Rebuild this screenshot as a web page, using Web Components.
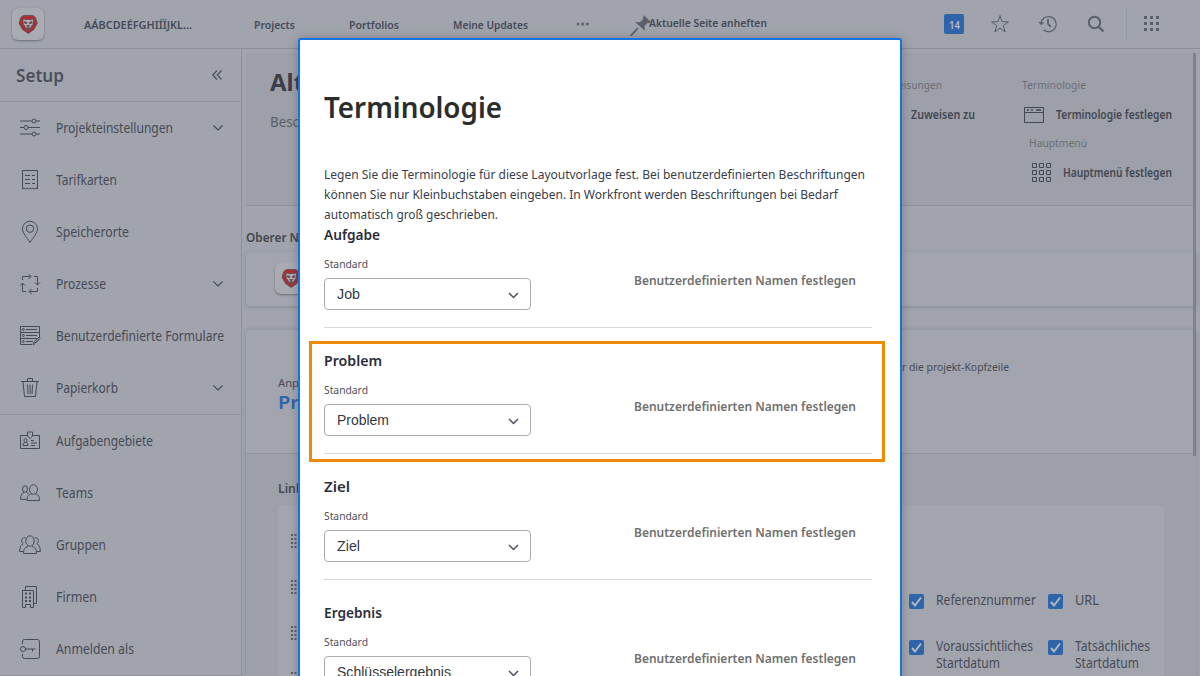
<!DOCTYPE html>
<html lang="de">
<head>
<meta charset="utf-8">
<title>Terminologie</title>
<style>
html,body{margin:0;height:676px;overflow:hidden}
body{font-family:"Noto Sans","Open Sans",sans-serif;font-size:13px;color:#464a57;background:#a1a4ac}
</style>
</head>
<body>
<setup-app></setup-app>
<script>
function define(name, html, extend) {
  customElements.define(name, class extends HTMLElement {
    connectedCallback() {
      if (this.shadowRoot) return;
      this.attachShadow({mode: 'open'}).innerHTML = typeof html === 'function' ? html(this) : html;
      if (extend) extend(this);
    }
  });
}

const lion = `<path fill="#a92f31" d="M6 1h14l4 3 2.500 8.500-5 9.500-8.500 6-8.500-6L-.5 12.500 2 4z"/><path fill="#b4b2b8" d="M6 6l3.500 1.500 3.500-.5 3.500.5L20 6l1 4-1 1.500.5 3-2.500 2-1.500 4-3.500 2-3.500-2L8 16.500l-2.500-2 .5-3L5 10z"/><path fill="#a92f31" d="M7.500 10l4 1.700-.7 1.700-3-.8zM18.500 10l-4 1.700.7 1.700 3-.8zM10.700 16h4.600L13 18.500zM10 20l3-1 3 1-3 .7z"/>`;
const icons = {
  lion: [27, 29, lion],
  sliders: [20, 20, '<path d="M0 3h12M16 3h4M0 9.500h4M8 9.500h12M0 16h12M16 16h4"/><circle cx="14" cy="3" r="2"/><circle cx="6" cy="9.500" r="2"/><circle cx="14" cy="16" r="2"/>'],
  card: [20, 20, '<path d="M2.500 19V.5h15V19l-1.500-1-1.500 1-1.500-1-1.500 1-1.500-1-1.500 1-1.500-1-1.500 1-1.500-1zM5 5.500h5M12 5.500h3M5 9.500h5M12 9.500h3M5 13.500h5M12 13.500h3"/>'],
  pin: [20, 22, '<path d="M10 21.500C7 16.500 2.500 12.500 2.500 7.700a7.500 7.500 0 0 1 15 0C17.500 12.500 13 16.500 10 21.500z"/><circle cx="10" cy="7.700" r="3.700"/>'],
  cycle: [20, 20, '<path d="M2.500 6V2.500h8M8.500 0 11 2.500 8.500 5M14 2.500h3.500V11M15 8.500l2.500 2.500L20 8.500M17.500 14v3.500H9.500M11.500 15 9 17.500l2.500 2.500M6 17.500H2.500V9M0 11.500 2.500 9 5 11.500"/>'],
  form: [20, 20, '<path d="M12 18.500H.5V.5h19V12M.5 6.500h19M.5 12.500h17M6 3.500h11M6 9.500h11M6 15.500h7M13 19l1-3 5-5 1 1.500-5 5zM15 17l4-4"/><circle cx="3.300" cy="3.500" r="1"/><circle cx="3.300" cy="9.500" r="1"/><circle cx="3.300" cy="15.500" r="1"/>'],
  trash: [20, 20, '<path d="M1 3.500h18M7.500 3.500v-3h5v3M3 4l1.500 14.500h11L17 4M7.500 6.500l.5 9.500M10 6.500V16M12.500 6.500L12 16"/>'],
  badge: [20, 20, '<path d="M7.500 4.500H.5v13h19v-13h-7M7.500 1h5v4L10 7.500 7.500 5zM3 14.500c0-2.500 1-3 2.500-3s2.500.5 2.500 3zM11 9.500h3M11 12h6M11 14.500h4"/><ellipse cx="5.500" cy="9.500" rx="1.500" ry="2"/>'],
  team: [20, 18, '<ellipse cx="13.500" cy="5.500" rx="4" ry="4.800"/><ellipse cx="5" cy="5" rx="2.500" ry="3.200"/><path d="M11.500 10c-3 .7-4.500 2-4.500 6.500h12.500c0-4.500-1-5.800-4-6.500M4 8.300c-2.500.7-3 3-3.500 7h6M6.500 8.300l2 1.500"/>'],
  groups: [22, 20, '<ellipse cx="11" cy="6" rx="4.200" ry="5.200"/><path d="M9 11.500c-3 .7-4.500 2.500-4.500 7h13c0-4.500-1.500-6.300-4.500-7M6.500 3c-2-1-4 .5-3.800 3 .1 1.500.8 2 1.500 2.700C1.500 10 1 12 .6 16.500h3.500M15.500 3c2-1 4 .5 3.800 3-.1 1.500-.8 2-1.500 2.700 2.700 1.300 3.200 3.300 3.600 7.800h-3.500"/>'],
  firm: [20, 22, '<path d="M2.500 4.500h11v17h-3v-3h-5v3h-3zM5.500 4V.5h11v17H14"/><path d="M5 7.500h2M9 7.500h2M5 11.500h2M9 11.500h2M5 15h2M9 15h2" stroke-width="2"/>'],
  key: [20, 20, '<circle cx="3" cy="10" r="2.500"/><path d="M5.500 10h10M12.500 10v2.500M2.500 5V2.500q0-2 2-2h13q2 0 2 2v15q0 2-2 2h-13q-2 0-2-2V15"/>'],
  collapse: [10, 10, '<path d="M5 .5.8 5 5 9.500M9.500.5 5.300 5l4.200 4.500" stroke-width="1.200"/>'],
  down: [10, 6, '<path d="M.5.500 5 5 9.500.5" stroke-width="1.100"/>'],
  downbold: [11, 7, '<path d="M1 1l4.500 4.500L10 1" stroke-width="1.500"/>'],
  pushpin: [24, 24, '<path fill="currentColor" stroke="none" d="M14.500 1 22.500 8.500 18.500 9l-3 3 .5 5L6 8l5 .3 3.200-3.300z"/><path d="M9 14 1.500 22" stroke-width="1.800"/>'],
  star: [18, 18, '<path d="M9 .500l2 6.200 6.500.1-5.200 3.900 1.900 6.300L9 13.200 3.800 17l1.900-6.300L.5 6.800 7 6.700z"/>'],
  history: [18, 18, '<path d="M2 9A7.600 7.600 0 1 1 4.500 14.800M.2 7 2.200 9.300 4.700 7.300" stroke-width="1.200"/><path d="M9 4v5l2.800 2.800" stroke-width="1.800"/>'],
  search: [18, 18, '<circle cx="7.500" cy="7.500" r="5.700" stroke-width="2"/><path d="M12 12l4.500 4.500" stroke-width="2.400"/>'],
  apps: [16, 16, '<path fill="currentColor" stroke="none" d="M0 0h3v3H0zM6 0h3v3H6zM12 0h3v3h-3zM0 6h3v3H0zM6 6h3v3H6zM12 6h3v3h-3zM0 12h3v3H0zM6 12h3v3H6zM12 12h3v3h-3z"/>'],
  more: [14, 4, '<g fill="currentColor" stroke="none"><circle cx="2" cy="2" r="1.500"/><circle cx="6.700" cy="2" r="1.500"/><circle cx="11.300" cy="2" r="1.500"/></g>'],
  window: [20, 16, '<path d="M.5.500h19v15H.5zM.5 5.500h19"/><path d="M3 3h2M7 3h2M12 3h5" stroke-width="1.700"/>'],
  menu: [20, 20, '<path d="M1.500.500h4v4h-4zM8.500.500h4v4h-4zM15.500.500h4v4h-4zM1.500 7.500h4v4h-4zM8.500 7.500h4v4h-4zM15.500 7.500h4v4h-4zM1.500 14.500h4v4h-4zM8.500 14.500h4v4h-4zM15.500 14.500h4v4h-4z"/>'],
  grip: [6, 14, '<path d="M0 1h2M3.500 1h2M0 5h2M3.500 5h2M0 9h2M3.500 9h2M0 13h2M3.500 13h2" stroke-width="2"/>']
};
define('ui-icon', el => {
  const [w, h, body] = icons[el.getAttribute('name')];
  return `<style>:host{display:block;flex:none;width:${w}px;height:${h}px}svg{display:block;overflow:visible}</style>
  <svg width="${w}" height="${h}" viewBox="0 0 ${w} ${h}" fill="none" stroke="currentColor" stroke-width="1">${body}</svg>`;
});

define('check-item', `<style>
:host{display:flex;gap:12px;align-items:flex-start}
i{width:15px;height:15px;background:#2e64aa;border-radius:2px;flex:none;margin-top:4px}
svg{display:block}
div{line-height:17px;padding-top:2px}
</style><i><svg width="15" height="15"><path d="M3 8l3 3.500L12 3.500" fill="none" stroke="#b5b8bf" stroke-width="2"/></svg></i><div><slot></slot></div>`);

define('nav-item', el => `<style>
:host{display:flex;height:52px;align-items:center;padding:0 18px 0 19px;box-sizing:border-box}
.i{width:22px;flex:none;display:flex;justify-content:center;margin-right:15px}
.c{margin-left:auto}
</style><div class="i"><ui-icon name="${el.getAttribute('icon')}"></ui-icon></div><slot></slot>
${el.hasAttribute('open') ? '<ui-icon class="c" name="down"></ui-icon>' : ''}`);

define('side-nav', `<style>
:host{display:block;width:242px;box-sizing:border-box;border-right:1px solid #8f929a;height:627px;overflow:hidden}
header{height:52px;border-bottom:1px solid #8f929a;display:flex;align-items:center;justify-content:space-between;padding:0 19px 0 16px;color:#4c505c}
hr{border:0;height:1px;background:#8f929a;margin:0}
</style>
<header><fit-text w="48" s="18" b="600">Setup</fit-text><ui-icon name="collapse"></ui-icon></header>
<nav>
<nav-item icon="sliders" open><fit-text w="117" s="13.5">Projekteinstellungen</fit-text></nav-item>
<nav-item icon="card"><fit-text w="61" s="13.5">Tarifkarten</fit-text></nav-item>
<nav-item icon="pin"><fit-text w="73" s="13.5">Speicherorte</fit-text></nav-item>
<nav-item icon="cycle" open><fit-text w="50" s="13.5">Prozesse</fit-text></nav-item>
<nav-item icon="form"><fit-text w="168" s="13.5">Benutzerdefinierte Formulare</fit-text></nav-item>
<nav-item icon="trash" open><fit-text w="62" s="13.5">Papierkorb</fit-text></nav-item>
<hr>
<nav-item icon="badge"><fit-text w="97" s="13.5">Aufgabengebiete</fit-text></nav-item>
<nav-item icon="team"><fit-text w="37" s="13.5">Teams</fit-text></nav-item>
<nav-item icon="groups"><fit-text w="50" s="13.5">Gruppen</fit-text></nav-item>
<nav-item icon="firm"><fit-text w="41" s="13.5">Firmen</fit-text></nav-item>
<nav-item icon="key"><fit-text w="78" s="13.5">Anmelden als</fit-text></nav-item>
<hr>
</nav>`);

define('logo-tile', `<style>
:host{display:flex;width:32px;height:32px;border-radius:6px;align-items:center;justify-content:center;background:#a8abb2;box-shadow:0 1px 2px #696c74}
ui-icon{transform:scale(.67)}
</style><ui-icon name="lion"></ui-icon>`);

define('top-bar', `<style>
:host{display:flex;height:48px;border-bottom:1px solid #8a8d95;align-items:center;box-sizing:content-box;padding-left:12px}
logo-tile{margin-right:40px}
.more{margin:-1px 39px 0 48px;color:#5f626b}
.pin{margin:3px -4px 0 0;color:#5b5f69}
.pt{margin-top:-4px}
.a{color:#5b5f68;margin:0}
.badge{width:20px;height:20px;margin-left:177px;background:#2e64aa;border-radius:2px;color:#b9bcc5;display:flex;align-items:center;justify-content:center}
.sep{width:1px;height:32px;background:#959aa2}
</style>
<logo-tile></logo-tile>
<fit-text w="108" s="11" b="600">AÁBCDEÉFGHIÍÏJKL...</fit-text>
<fit-text w="41" s="11.500" b="600" style="margin-left:62px">Projects</fit-text>
<fit-text w="50" s="11.500" b="600" style="margin-left:54px">Portfolios</fit-text>
<fit-text w="75" s="11.500" b="600" style="margin-left:54px">Meine Updates</fit-text>
<ui-icon class="more" name="more"></ui-icon>
<ui-icon class="pin" name="pushpin"></ui-icon>
<fit-text class="pt" w="118" s="11.500" b="600">Aktuelle Seite anheften</fit-text>
<div class="badge"><fit-text w="11" s="11" b="600">14</fit-text></div>
<ui-icon class="a" name="star" style="margin-left:27px"></ui-icon>
<ui-icon class="a" name="history" style="margin-left:30px"></ui-icon>
<ui-icon class="a" name="search" style="margin-left:30px"></ui-icon>
<div class="sep" style="margin-left:21px"></div>
<ui-icon class="a" name="apps" style="margin-left:17px"></ui-icon>`);

define('layout-page', `<style>
:host{display:block;position:relative;padding:4px 4px 0 4px;overflow:hidden;box-sizing:border-box;height:627px}
.top{height:152px;border-bottom:1px solid #8f929a;background:#9da0a8;display:flex;justify-content:space-between}
.title{padding:13px 0 0 24px;color:#3c3f49;line-height:32px}
.title .d{color:#5b5e68;margin-top:8px}
.acts{display:flex;padding:22px 24px 0 0;color:#434753}
.acts .g{color:#6a6d76}
.l{margin-right:37px;width:74px}
.r{display:flex;flex-direction:column;align-items:flex-end;width:150px}
.row{display:flex;gap:12px;align-items:center;height:20px}
.l .g,.r .g{display:flex;height:18px;align-items:center}
.row ui-icon{margin-top:1px}
.oh{height:46px;display:flex;align-items:flex-end;color:#44474f}
.oh fit-text{margin-bottom:6px}
.card{height:54px;border-radius:4px;background:#a2a5ad;box-shadow:0 1px 4px #858891;display:flex;align-items:center;padding-left:29px}
.card logo-tile{margin-top:-2px}
.big{margin-top:24px;border-radius:4px 4px 0 0;box-shadow:0 0 4px #858891;height:400px;background:#9da0a8}
.bh{height:123px;background:#a2a5ad;border-bottom:1px solid #8f929a;border-radius:4px 4px 0 0;display:flex}
.bh .p{padding:43px 0 0 32px;width:656px;flex:none;box-sizing:border-box}
.bh .k{padding-top:29px}
.lk{height:52px;padding-left:32px;display:flex;align-items:center;color:#474a52;box-sizing:border-box;padding-top:15px}
.box{margin:0 32px;background:#a2a5ad;height:220px;display:flex;padding:28px 0 0 13px;box-sizing:border-box}
.grips{display:grid;row-gap:32px;align-content:start;color:#5a5d66;width:618px}
.checks{display:grid;grid-template-columns:139px 110px;grid-auto-rows:46px;padding-top:56px}
.sb{position:absolute;left:951px;top:4px;width:3px;height:403px;background:#7f828a}
</style>
<div class="top">
 <div class="title"><fit-text w="34" s="24" b="700">Alt</fit-text><fit-text class="d" w="29" s="13.5">Besc</fit-text></div>
 <div class="acts">
  <div class="l"><div class="g"><fit-text w="44" s="11.500" style="margin-left:-13px">eisungen</fit-text></div><div class="row" style="margin-top:11px"><fit-text w="64" s="12" b="600">Zuweisen zu</fit-text></div></div>
  <div class="r"><div class="g" style="width:150px"><fit-text w="64" s="11.500">Terminologie</fit-text></div>
  <div class="row" style="margin-top:11px"><ui-icon name="window"></ui-icon><fit-text w="116" s="12" b="600">Terminologie festlegen</fit-text></div>
  <div class="g" style="width:143px;margin-top:9px"><fit-text w="58" s="11.500">Hauptmenü</fit-text></div>
  <div class="row" style="margin-top:11px"><ui-icon name="menu"></ui-icon><fit-text w="109" s="12" b="600">Hauptmenü festlegen</fit-text></div></div>
 </div>
</div>
<div class="oh"><fit-text w="53" s="12.500" b="600">Oberer N</fit-text></div>
<div class="card"><logo-tile></logo-tile></div>
<div class="big">
 <div class="bh"><div class="p"><fit-text w="21" s="11.500" style="line-height:20px">Anp</fit-text><fit-text w="21" s="18" b="600" style="line-height:19px;color:#2e64aa">Pr</fit-text></div>
 <div class="k"><fit-text w="107" s="11.500">r die projekt-Kopfzeile</fit-text></div></div>
 <div class="lk"><fit-text w="25" s="13" b="600">Link</fit-text></div>
 <div class="box">
  <div class="grips"><ui-icon name="grip"></ui-icon><ui-icon name="grip"></ui-icon><ui-icon name="grip"></ui-icon><ui-icon name="grip"></ui-icon></div>
  <div class="checks">
   <check-item><fit-text w="100" s="13.500">Referenznummer</fit-text></check-item>
   <check-item><fit-text w="24" s="13.500">URL</fit-text></check-item>
   <check-item><fit-text w="97" s="13.500">Voraussichtliches</fit-text><fit-text w="64" s="13.500">Startdatum</fit-text></check-item>
   <check-item><fit-text w="75" s="13.500">Tatsächliches</fit-text><fit-text w="64" s="13.500">Startdatum</fit-text></check-item>
  </div>
 </div>
</div>
<div class="sb"></div>`);

define('term-row', el => `<style>
:host{display:block;height:126px;width:548px;box-sizing:border-box}
.in{height:103px;border-bottom:1px solid #d8d8da;display:flex;justify-content:space-between;align-items:flex-start}
h3{margin:0;color:#2b2e3a;font-size:15px;height:20px;line-height:20px}
.lab{margin-top:12px;height:16px;line-height:16px;color:#4b4f5a}
.sel{margin-top:6px;width:207px;height:32px;box-sizing:border-box;border:1px solid #aaacaf;border-radius:4px;display:flex;align-items:center;justify-content:space-between;padding:0 11px 0 12px;color:#35383f;font-family:"Liberation Sans",sans-serif}
.sel ui-icon{margin-top:2px;color:#4b4f5f}
.cn{margin:46px 16px 0 0;line-height:20px;color:#707070}
</style>
<div class="in"><div>
<h3><fit-text w="${el.getAttribute('tw')}" s="15" b="600">${el.getAttribute('title')}</fit-text></h3>
<div class="lab"><fit-text w="44" s="11.500">Standard</fit-text></div>
<div class="sel"><fit-text w="${el.getAttribute('vw')}" s="14">${el.getAttribute('value')}</fit-text><ui-icon name="downbold"></ui-icon></div>
</div><div class="cn"><fit-text w="222" s="13" b="600">Benutzerdefinierten Namen festlegen</fit-text></div></div>`);

define('term-dialog', `<style>
:host{position:absolute;left:298px;top:38px;width:604px;height:645px;box-sizing:border-box;border:2px solid #1473e6;border-radius:3px;background:#fff;padding:0 24px;box-shadow:0 0 10px rgba(40,44,55,.3)}
h1{margin:45px 0 0;height:45px;line-height:44px;color:#2c2c2c}
p{margin:34px 0 0;line-height:20px;color:#393d4a}
.mark{position:absolute;left:9px;top:301px;width:576px;height:121px;box-sizing:border-box;border:3px solid #ee8a05}
</style>
<h1><fit-text w="178" s="29.500" b="600">Terminologie</fit-text></h1>
<p><fit-text w="541" s="13">Legen Sie die Terminologie für diese Layoutvorlage fest. Bei benutzerdefinierten Beschriftungen</fit-text>
<fit-text w="514" s="13">können Sie nur Kleinbuchstaben eingeben. In Workfront werden Beschriftungen bei Bedarf</fit-text>
<fit-text w="174" s="13">automatisch groß geschrieben.</fit-text></p>
<term-row title="Aufgabe" tw="56" value="Job" vw="23"></term-row>
<term-row title="Problem" tw="58" value="Problem" vw="52"></term-row>
<term-row title="Ziel" tw="26" value="Ziel" vw="23"></term-row>
<term-row title="Ergebnis" tw="58" value="Schlüsselergebnis" vw="114"></term-row>
<div class="mark"></div>`);

define('setup-app', `<style>
:host{display:block;position:relative;width:1200px;height:676px;overflow:hidden}
main{display:grid;grid-template-columns:242px 958px}
</style><top-bar></top-bar><main><side-nav></side-nav><layout-page></layout-page></main><term-dialog></term-dialog>`);

define('fit-text', el => `<style>
:host{display:block;flex:none;white-space:nowrap;width:${el.getAttribute('w')}px;font-size:${el.getAttribute('s')}px;font-weight:${el.getAttribute('b') || 400}}
span{display:inline-block;transform-origin:0 50%;vertical-align:top}
</style><span><slot></slot></span>`, el => {
  const s = el.shadowRoot.querySelector('span');
  s.style.transform = `scaleX(${el.getAttribute('w') / s.getBoundingClientRect().width})`;
});
</script>
</body>
</html>
